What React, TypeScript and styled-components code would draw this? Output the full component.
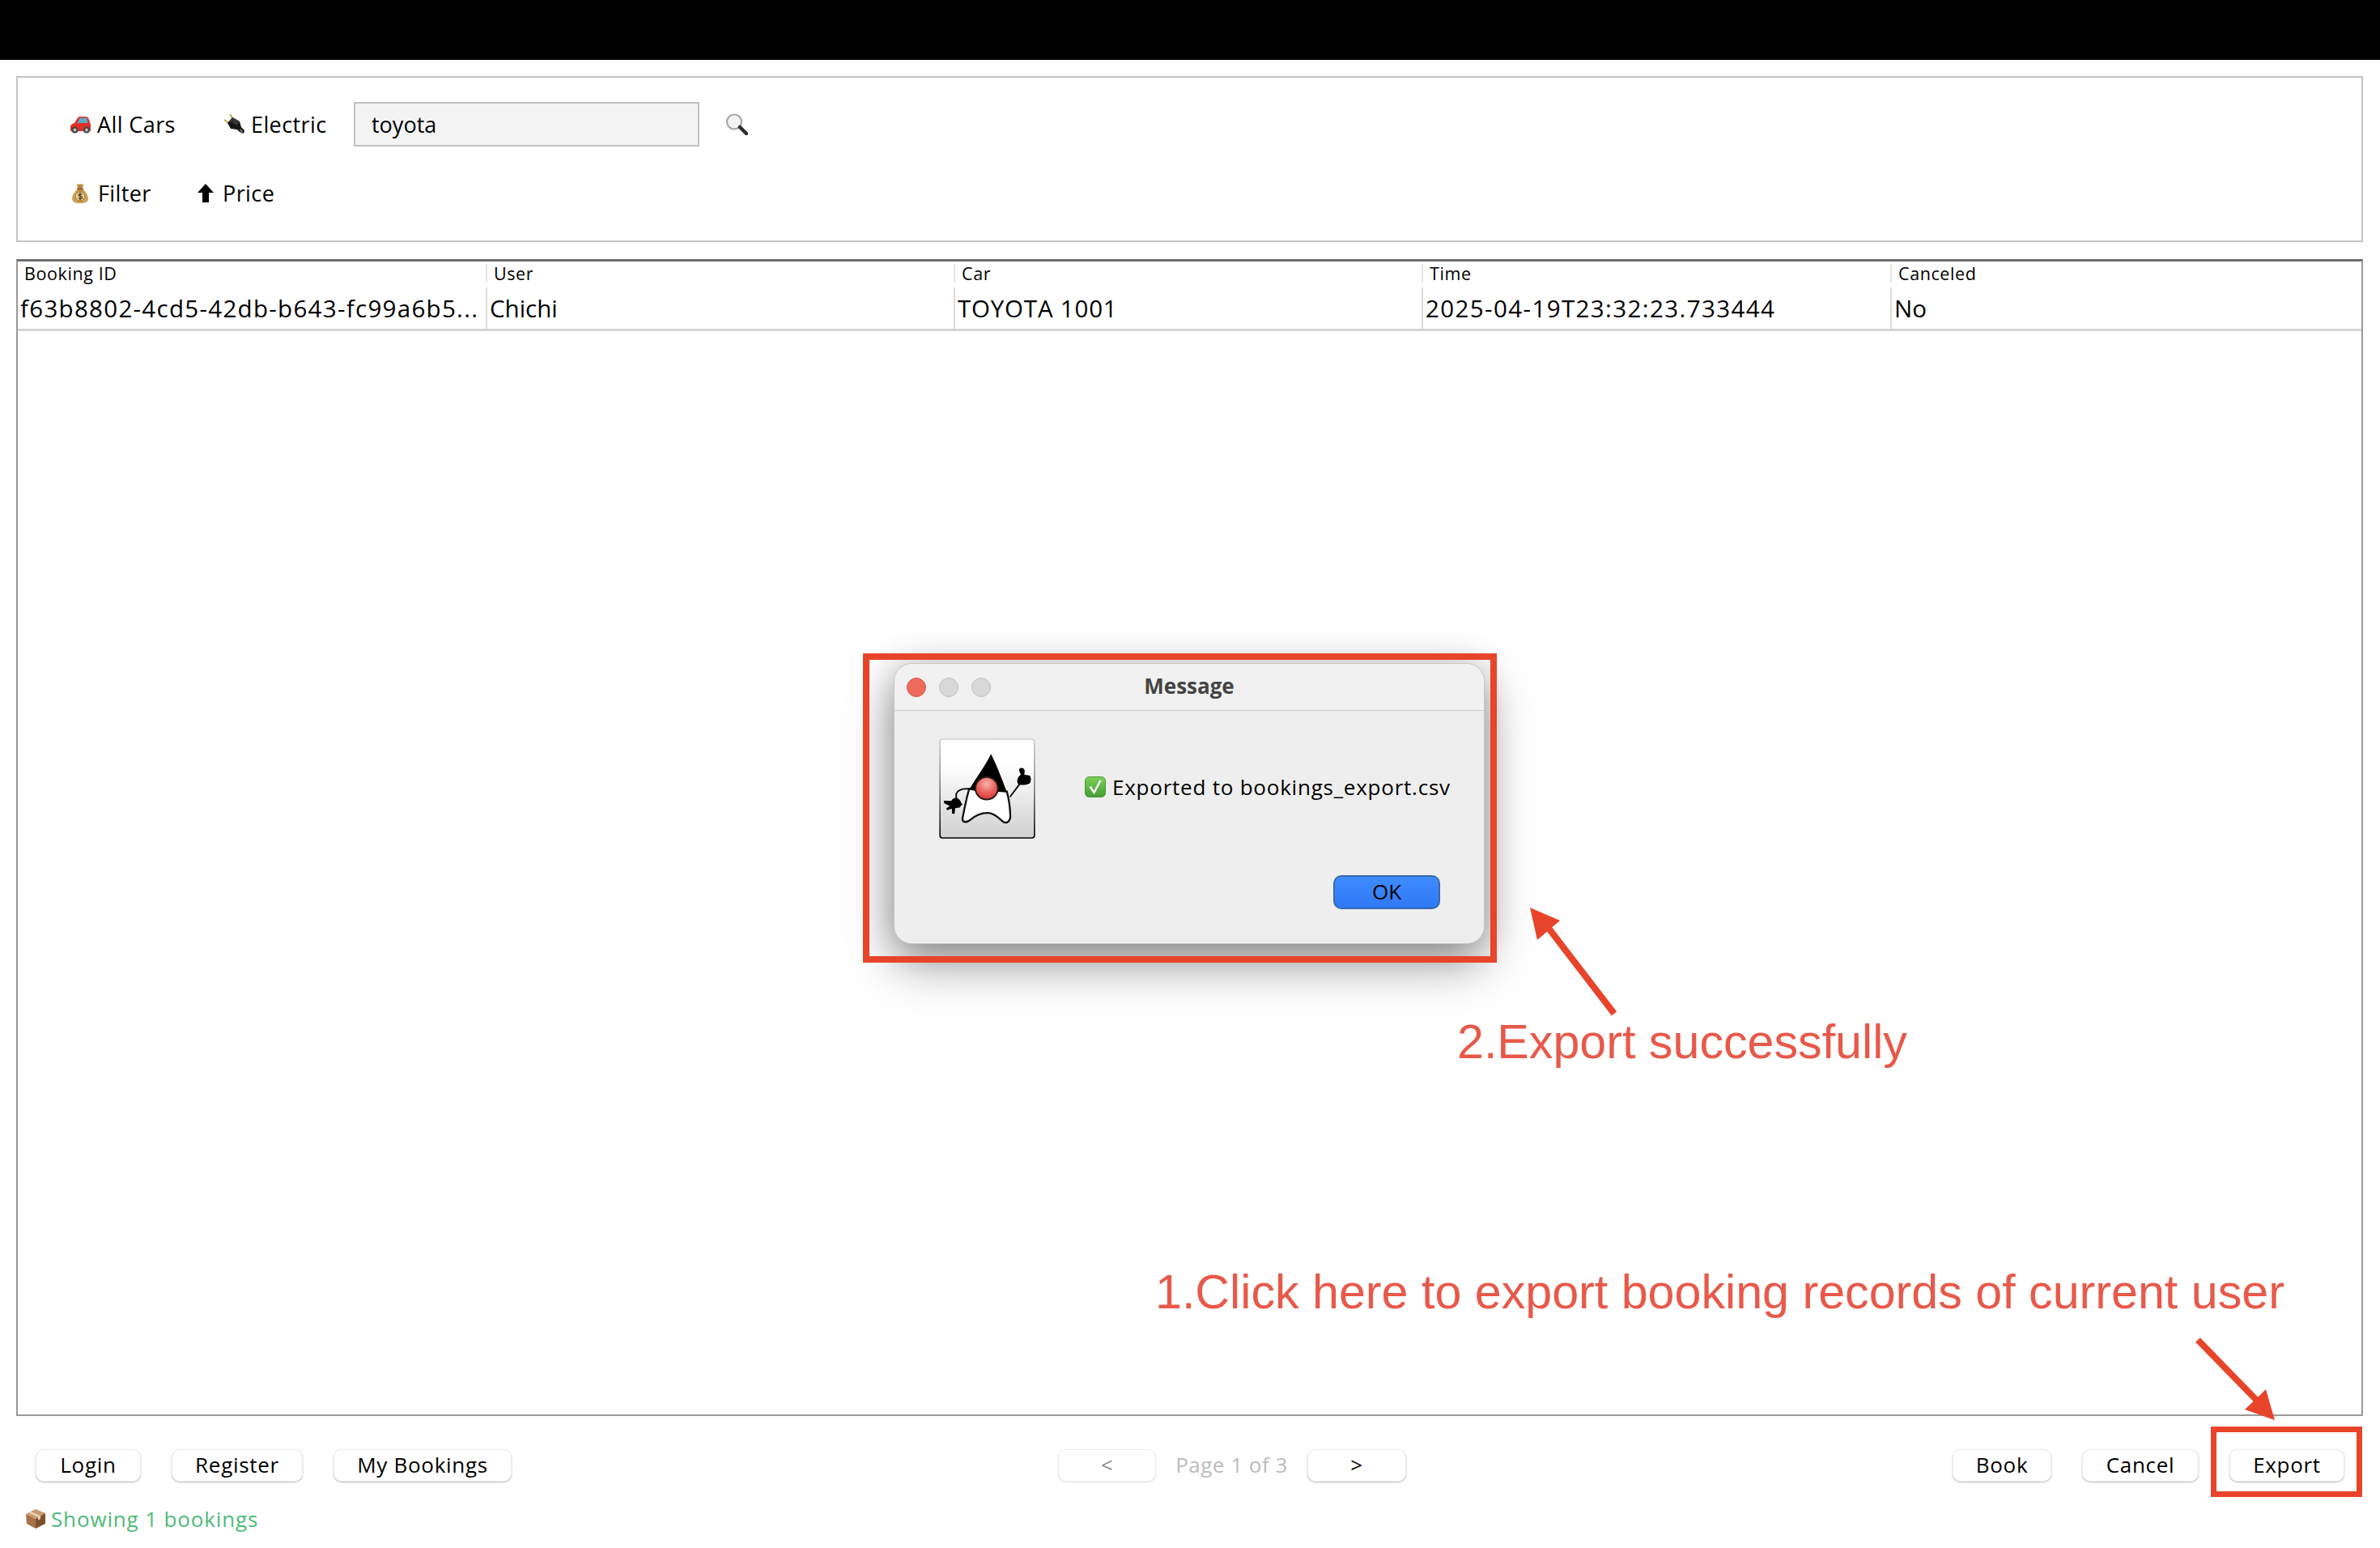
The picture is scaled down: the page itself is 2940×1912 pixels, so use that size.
import React from "react";
import styled, { createGlobalStyle } from "styled-components";

const GlobalStyle = createGlobalStyle`
  html, body {
    margin: 0;
    padding: 0;
    background: #fff;
  }
  * {
    box-sizing: border-box;
  }
`;

const UI_FONT = `"Open Sans", "Noto Sans", "DejaVu Sans", sans-serif`;
const RED = "#e8442a";

const COLUMNS = ["Booking ID", "User", "Car", "Time", "Canceled"];
const ROW = [
  { value: "f63b8802-4cd5-42db-b643-fc99a6b5...", track: 1.3 },
  { value: "Chichi", track: 0 },
  { value: "TOYOTA 1001", track: 0.8 },
  { value: "2025-04-19T23:32:23.733444", track: 1.4 },
  { value: "No", track: 0 },
];

const Page = styled.div`
  position: relative;
  width: 2940px;
  height: 1912px;
  overflow: hidden;
  display: flex;
  flex-direction: column;
  background: #fff;
  color: #000;
  font-family: ${UI_FONT};
`;

const TopBar = styled.div`
  height: 74px;
  flex: none;
  background: #000;
`;

const Content = styled.main`
  flex: 1;
  display: flex;
  flex-direction: column;
  padding: 20px 21px 0 20px;
`;

const SearchPanel = styled.section`
  height: 205px;
  flex: none;
  border: 2px solid #c4c4c4;
  padding: 30px 0 0 64px;
  display: flex;
  flex-direction: column;
  gap: 30px;
`;

const ToolRow = styled.div<{ $indent?: number }>`
  height: 55px;
  padding-left: ${(p) => p.$indent ?? 0}px;
  display: flex;
  align-items: center;
`;

const ToolItem = styled.div<{ $w: number; $gap: number }>`
  width: ${(p) => p.$w}px;
  display: flex;
  align-items: center;
  gap: ${(p) => p.$gap}px;
  font-size: 27px;
  letter-spacing: 0.4px;
  white-space: nowrap;
`;

const SearchInput = styled.div`
  width: 427px;
  height: 55px;
  margin-right: 32px;
  padding-left: 20px;
  display: flex;
  align-items: center;
  background: #f3f3f3;
  border: 2px solid #c2c2c2;
  font-size: 27px;
`;

const BookingTable = styled.section`
  height: 1429px;
  margin-top: 21px;
  flex: none;
  border: 2px solid #999;
  border-top: 3px solid #6e6e6e;
`;

const TableGrid = styled.div`
  display: grid;
  grid-template-columns: 580px 578px 578px 579px 580px;
`;

const HeaderRow = styled(TableGrid)`
  height: 27px;
  padding-top: 3px;
`;

const HeaderCell = styled.div`
  height: 23px;
  padding-left: 8px;
  display: flex;
  align-items: center;
  font-size: 21.5px;
  letter-spacing: 0.6px;
  border-right: 2px solid #e4e4e4;
  &:last-child {
    border-right: none;
  }
`;

const BodyRow = styled(TableGrid)`
  height: 54px;
  margin-top: 5px;
  border-bottom: 3px solid #d4d4d4;
`;

const BodyCell = styled.div<{ $track: number }>`
  padding-left: 3px;
  padding-bottom: 1px;
  display: flex;
  align-items: center;
  font-size: 29.5px;
  letter-spacing: ${(p) => p.$track}px;
  white-space: nowrap;
  border-right: 2px solid #dcdcdc;
  &:last-child {
    border-right: none;
  }
`;

const ActionBar = styled.div`
  margin-top: 41px;
  padding: 0 23px 0 24px;
  display: flex;
  justify-content: space-between;
  align-items: center;
`;

const ButtonGroup = styled.div`
  display: flex;
  align-items: center;
  gap: 38px;
`;

const Pager = styled.div`
  display: flex;
  align-items: center;
`;

const SwingButton = styled.button<{ $w: number; $muted?: boolean }>`
  width: ${(p) => p.$w}px;
  height: 40px;
  padding: 0 0 3px;
  background: #fff;
  border: 1px solid #ececec;
  border-radius: 10px;
  box-shadow: 0 1px 2px rgba(0, 0, 0, ${(p) => (p.$muted ? 0.12 : 0.28)});
  color: ${(p) => (p.$muted ? "#8a8a8a" : "#000")};
  font-family: ${UI_FONT};
  font-size: 26px;
  letter-spacing: 0.7px;
  line-height: 34px;
`;

const PageLabel = styled.span`
  width: 187px;
  padding-bottom: 2px;
  text-align: center;
  color: #bcbcbc;
  font-size: 26px;
  letter-spacing: 0.5px;
`;

const StatusLine = styled.div`
  margin-top: 28px;
  padding-left: 11px;
  height: 36px;
  display: flex;
  align-items: center;
  gap: 6px;
  color: #4dbb78;
  font-size: 26px;
  letter-spacing: 0.85px;
`;

/* message dialog and the red notes lie over the window */
const Dialog = styled.div`
  position: absolute;
  left: 1104px;
  top: 819px;
  width: 730px;
  height: 347px;
  display: flex;
  flex-direction: column;
  background: #eeeeee;
  border: 1px solid #c8c8c8;
  border-radius: 22px;
  box-shadow: 0 24px 60px rgba(0, 0, 0, 0.42), 0 0 40px rgba(0, 0, 0, 0.16);
`;

const DialogTitleBar = styled.div`
  height: 58px;
  flex: none;
  padding: 0 15px;
  display: grid;
  grid-template-columns: 1fr auto 1fr;
  align-items: center;
  background: #f1f1f1;
  border-bottom: 1px solid #cdcdcd;
  border-radius: 22px 22px 0 0;
`;

const TrafficLights = styled.div`
  display: flex;
  gap: 16px;
`;

const Light = styled.span<{ $on?: boolean }>`
  width: 24px;
  height: 24px;
  border-radius: 50%;
  background: ${(p) => (p.$on ? "#ec6a5e" : "#d8d8d8")};
  border: 1px solid ${(p) => (p.$on ? "#d9584d" : "#c0c0c0")};
`;

const DialogTitle = styled.div`
  padding-bottom: 4px;
  font-size: 26px;
  font-weight: 700;
  color: #444;
`;

const DialogBody = styled.div`
  padding: 34px 0 0 55px;
  display: flex;
  align-items: center;
  gap: 61px;
`;

const DialogMessage = styled.div`
  padding-bottom: 5px;
  display: flex;
  align-items: center;
  gap: 8px;
  font-size: 26px;
  letter-spacing: 0.77px;
`;

const DialogFooter = styled.div`
  margin-top: 45px;
  padding-right: 54px;
  display: flex;
  justify-content: flex-end;
`;

const OkButton = styled.button`
  width: 132px;
  height: 42px;
  padding: 0 0 3px;
  background: linear-gradient(#3f8cff, #2f78f5);
  border: 2px solid #3868b0;
  border-radius: 10px;
  color: #000;
  font-family: ${UI_FONT};
  font-size: 26px;
  line-height: 34px;
`;

const RedFrame = styled.div<{ $x: number; $y: number; $w: number; $h: number; $t: number }>`
  position: absolute;
  left: ${(p) => p.$x}px;
  top: ${(p) => p.$y}px;
  width: ${(p) => p.$w}px;
  height: ${(p) => p.$h}px;
  border: ${(p) => p.$t}px solid ${RED};
`;

const NoteText = styled.div<{ $x: number; $y: number }>`
  position: absolute;
  left: ${(p) => p.$x}px;
  top: ${(p) => p.$y}px;
  font-family: "Liberation Sans", Arial, sans-serif;
  font-size: 59.2px;
  line-height: 72px;
  color: #e8594a;
  white-space: nowrap;
`;

const ArrowLayer = styled.svg`
  position: absolute;
  left: 0;
  top: 0;
`;

const CarIcon = () => (
  <svg width="27" height="22" viewBox="0 0 27 22">
    <path d="M1 14c0-3 2-4 5-5l3-5c1-2 2-3 4-3h6c3 0 4 1 5 4l2 6v6c0 2-1 2-2 2H2c-1 0-1-1-1-5z" fill="#e02f2a" />
    <path d="M9.500 9l2.500-5c.5-1 1-1.500 2-1.500h5c1.500 0 2 .5 2.500 1.500l1 5z" fill="#5fa9c4" />
    <circle cx="6.500" cy="17.500" r="4" fill="#444" />
    <circle cx="6.500" cy="17.500" r="2" fill="#bbb" />
    <circle cx="21" cy="17.500" r="4" fill="#444" />
    <circle cx="21" cy="17.500" r="2" fill="#bbb" />
  </svg>
);

const PlugIcon = () => (
  <svg width="26" height="25" viewBox="0 0 26 25">
    <path d="M7 0l4 6M0 7l6 4" stroke="#b8a24a" strokeWidth="1.800" fill="none" />
    <path d="M10 4l9 5 2 7 4 4-1 4-5-2-3-3-8-1-4-7z" fill="#161616" />
    <path d="M10 4l9 5-3 5-9-5z" fill="#333" />
    <path d="M20 18l3 3-1 2-3-3z" fill="#777" />
  </svg>
);

const SearchIcon = () => (
  <svg width="28" height="27" viewBox="0 0 28 27">
    <circle cx="11" cy="10.500" r="9" fill="#f4f4f4" stroke="#a8a8a8" strokeWidth="2.200" />
    <path d="M18 17l8 8" stroke="#2b2b2b" strokeWidth="4.500" strokeLinecap="round" />
  </svg>
);

const BagIcon = () => (
  <svg width="20" height="25" viewBox="0 0 20 25">
    <path d="M6 1l2 1 2-1 2 1 2-1-1 6H7z" fill="#b98c3e" />
    <path d="M7 6h6l1 2c3 3 6 8 6 11 0 4-3 6-10 6S0 23 0 19c0-3 3-8 6-11z" fill="#cfa255" />
    <rect x="6.500" y="6.500" width="7" height="2" fill="#7d5c25" />
    <circle cx="10" cy="16.500" r="5.800" fill="#ecd394" stroke="#7d5c25" strokeWidth=".8" />
    <path d="M12.500 14.300c-1-1-4.500-1-4.500.8s4.800 1 4.800 2.900-3.800 1.800-5.200.6M10 11.500v10" stroke="#4b3413" strokeWidth="1.200" fill="none" />
  </svg>
);

const UpArrowIcon = () => (
  <svg width="20" height="23" viewBox="0 0 20 23">
    <path d="M10 0l10 11h-6v12H6V11H0z" fill="#000" />
  </svg>
);

const CheckIcon = () => (
  <svg width="26" height="26" viewBox="0 0 26 26">
    <defs>
      <linearGradient id="checkFill" x1="0" y1="0" x2="0" y2="1">
        <stop offset="0" stopColor="#7fd05a" />
        <stop offset="1" stopColor="#3f9f32" />
      </linearGradient>
    </defs>
    <rect x="0.500" y="0.500" width="25" height="25" rx="5" fill="url(#checkFill)" stroke="#4a9b3c" />
    <path d="M6.500 12.500l5 7.500 8-15" stroke="#fff" strokeWidth="2.400" fill="none" />
  </svg>
);

const PackageIcon = () => (
  <svg width="26" height="26" viewBox="0 0 26 26">
    <path d="M1 7l12-6 12 5-12 7z" fill="#c79a6b" />
    <path d="M1 7l12 6v12L2 19z" fill="#a87144" />
    <path d="M13 13l12-7v13l-12 6z" fill="#7d4f2c" />
    <path d="M7 4l12 5v4l-3 1.500V11L4.500 5.500z" fill="#e6d2b6" />
  </svg>
);

// java duke, coordinates follow the 3x crop of the message icon
const DukeIcon = () => (
  <svg width="119" height="124" viewBox="120 64 358 374">
    <defs>
      <linearGradient id="dukeBack" x1="0" y1="0" x2="0" y2="1">
        <stop offset="0.25" stopColor="#ffffff" />
        <stop offset="1" stopColor="#d0d0d0" />
      </linearGradient>
      <linearGradient id="dukeEdge" x1="0" y1="0" x2="0" y2="1">
        <stop offset="0" stopColor="#cfcfcf" />
        <stop offset="0.5" stopColor="#808080" />
        <stop offset="1" stopColor="#000" />
      </linearGradient>
      <radialGradient id="dukeNose" cx="0.5" cy="0.3" r="0.7">
        <stop offset="0" stopColor="#f6b3aa" />
        <stop offset="0.6" stopColor="#e85f58" />
        <stop offset="1" stopColor="#d63a36" />
      </radialGradient>
    </defs>
    <rect x="123" y="67" width="352" height="368" rx="9" fill="url(#dukeBack)" stroke="url(#dukeEdge)" strokeWidth="5" />
    <path
      d="M232 252C222 285 214 325 207 362C206 378 222 380 238 366C262 346 285 340 305 342C330 345 345 364 360 376C375 382 387 370 385 350C384 320 380 290 372 262Z"
      fill="#fff"
      stroke="#111"
      strokeWidth="7"
    />
    <path d="M313 122C292 165 258 212 232 254L262 262H340L372 264C356 220 335 165 313 122Z" fill="#000" />
    <circle cx="297" cy="250" r="42" fill="url(#dukeNose)" stroke="#2a1a1a" strokeWidth="6" />
    <path d="M232 252C210 250 190 255 184 270C180 285 186 295 205 312" fill="none" stroke="#111" strokeWidth="6" />
    <path
      d="M137 296L165 297C172 283 186 282 196 293C205 303 205 315 195 322L180 324L177 346L168 344L167 326L150 332L146 325L160 316L139 306Z"
      fill="#000"
    />
    <path d="M384 282L420 234" fill="none" stroke="#111" strokeWidth="6" />
    <path
      d="M418 180C420 172 436 172 438 182C440 190 436 194 438 200L456 202C464 206 464 230 454 233C442 238 424 240 414 234C408 226 410 208 424 200C424 194 417 188 418 180Z"
      fill="#000"
    />
  </svg>
);

export default function App() {
  return (
    <Page>
      <GlobalStyle />
      <TopBar />
      <Content>
        <SearchPanel>
          <ToolRow>
            <ToolItem $w={191} $gap={7}>
              <CarIcon /> All Cars
            </ToolItem>
            <ToolItem $w={160} $gap={7}>
              <PlugIcon /> Electric
            </ToolItem>
            <SearchInput>toyota</SearchInput>
            <SearchIcon />
          </ToolRow>
          <ToolRow $indent={3}>
            <ToolItem $w={155} $gap={12}>
              <BagIcon /> Filter
            </ToolItem>
            <ToolItem $w={120} $gap={11}>
              <UpArrowIcon /> Price
            </ToolItem>
          </ToolRow>
        </SearchPanel>

        <BookingTable>
          <HeaderRow>
            {COLUMNS.map((c) => (
              <HeaderCell key={c}>{c}</HeaderCell>
            ))}
          </HeaderRow>
          <BodyRow>
            {ROW.map((cell) => (
              <BodyCell key={cell.value} $track={cell.track}>
                {cell.value}
              </BodyCell>
            ))}
          </BodyRow>
        </BookingTable>

        <ActionBar>
          <ButtonGroup>
            <SwingButton $w={130}>Login</SwingButton>
            <SwingButton $w={162}>Register</SwingButton>
            <SwingButton $w={220}>My Bookings</SwingButton>
          </ButtonGroup>
          <Pager>
            <SwingButton $w={121} $muted>
              &lt;
            </SwingButton>
            <PageLabel>Page 1 of 3</PageLabel>
            <SwingButton $w={122}>&gt;</SwingButton>
          </Pager>
          <ButtonGroup>
            <SwingButton $w={122}>Book</SwingButton>
            <SwingButton $w={144}>Cancel</SwingButton>
            <SwingButton $w={142}>Export</SwingButton>
          </ButtonGroup>
        </ActionBar>

        <StatusLine>
          <PackageIcon /> Showing 1 bookings
        </StatusLine>
      </Content>

      <Dialog>
        <DialogTitleBar>
          <TrafficLights>
            <Light $on />
            <Light />
            <Light />
          </TrafficLights>
          <DialogTitle>Message</DialogTitle>
        </DialogTitleBar>
        <DialogBody>
          <DukeIcon />
          <DialogMessage>
            <CheckIcon /> Exported to bookings_export.csv
          </DialogMessage>
        </DialogBody>
        <DialogFooter>
          <OkButton>OK</OkButton>
        </DialogFooter>
      </Dialog>

      <RedFrame $x={1066} $y={807} $w={783} $h={382} $t={8} />
      <RedFrame $x={2731} $y={1762} $w={187} $h={87} $t={7} />

      <ArrowLayer width="2940" height="1912" viewBox="0 0 2940 1912">
        <path d="M1994 1252L1908 1140" stroke={RED} strokeWidth="8" fill="none" />
        <path d="M1890 1121L1927 1137L1899 1161Z" fill={RED} />
        <path d="M2715 1655L2792 1734" stroke={RED} strokeWidth="8" fill="none" />
        <path d="M2810 1754L2799 1716L2773 1741Z" fill={RED} />
      </ArrowLayer>

      <NoteText $x={1800} $y={1251}>
        2.Export successfully
      </NoteText>
      <NoteText $x={1427} $y={1560}>
        1.Click here to export booking records of current user
      </NoteText>
    </Page>
  );
}
